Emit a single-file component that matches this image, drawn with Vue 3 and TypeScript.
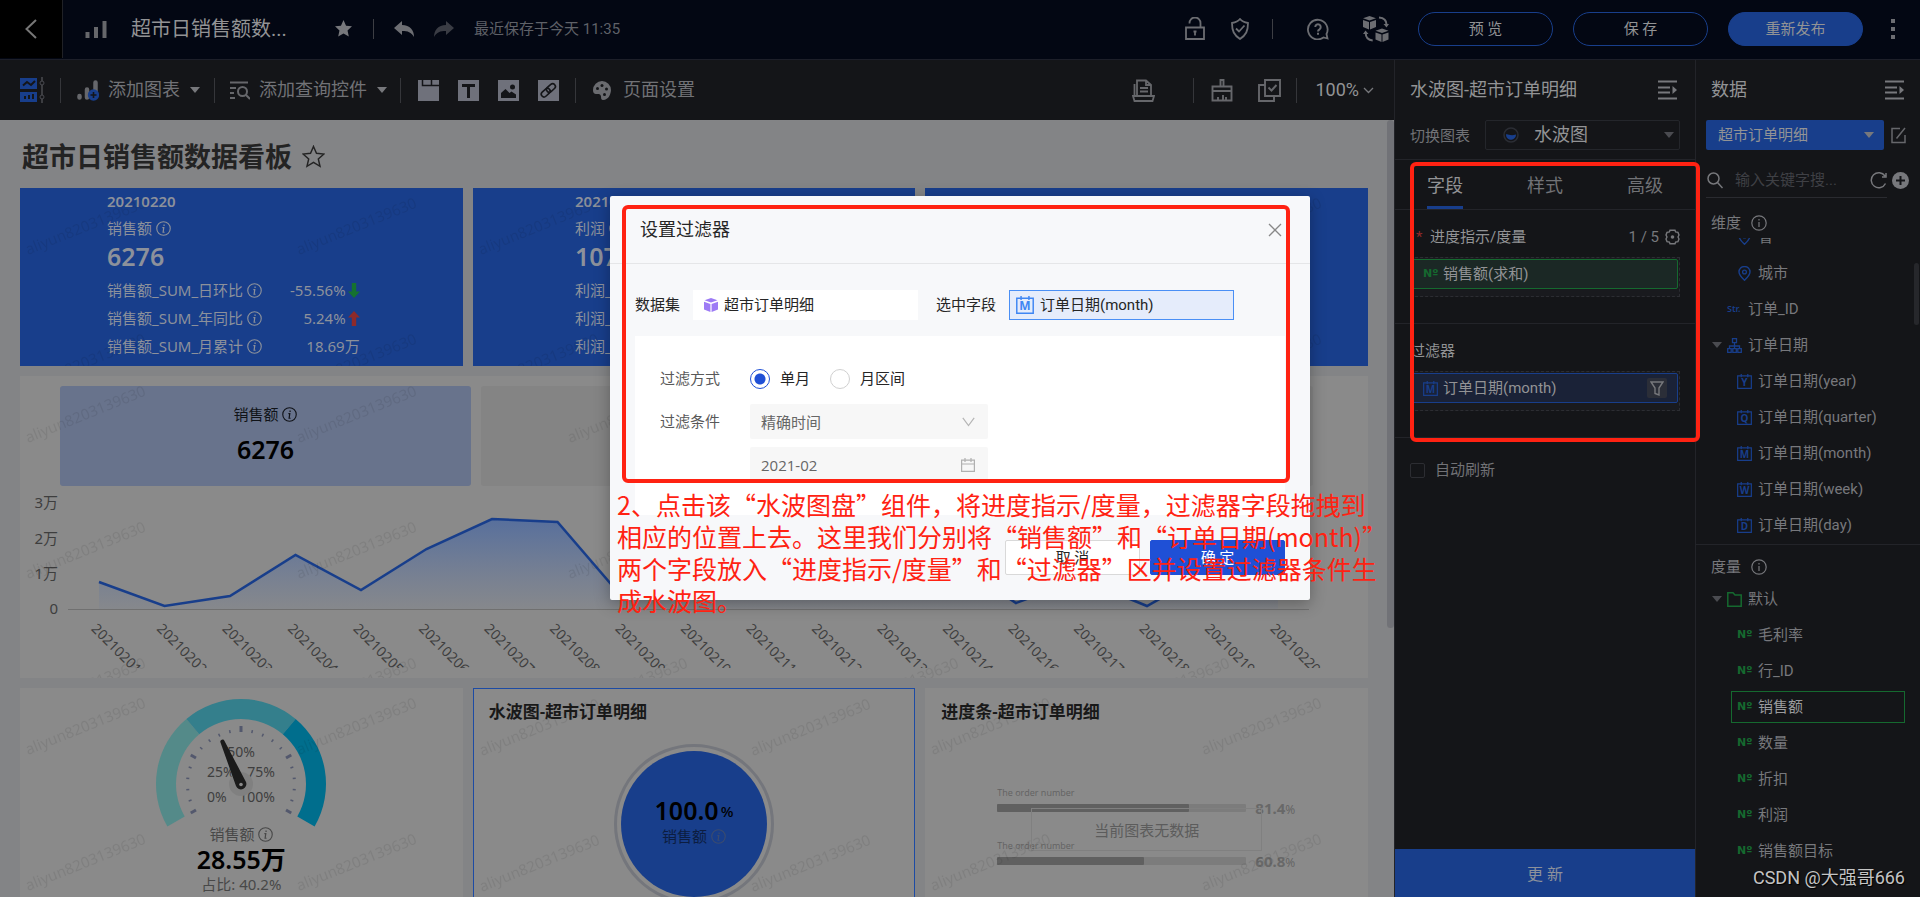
<script setup lang="ts">
import { ref } from 'vue'

interface KpiRow { label: string; value: string; trend?: 'up' | 'down' }
interface Kpi { date: string; name: string; total: string; rows: KpiRow[] }
interface Field { label: string; icon: 'pin' | 'str' | 'tree' | 'cal' | 'folder' | 'num'; letter?: string; level: 0 | 1; selected?: boolean }

const kpis: Kpi[] = [
  {
    date: '20210220', name: '销售额', total: '6276',
    rows: [
      { label: '销售额_SUM_日环比', value: '-55.56%', trend: 'down' },
      { label: '销售额_SUM_年同比', value: '5.24%', trend: 'up' },
      { label: '销售额_SUM_月累计', value: '18.69万' },
    ],
  },
  {
    date: '20210220', name: '利润', total: '1075',
    rows: [
      { label: '利润_SUM_日环比', value: '', trend: 'down' },
      { label: '利润_SUM_年同比', value: '', trend: 'up' },
      { label: '利润_SUM_月累计', value: '' },
    ],
  },
]

const dimensions: Field[] = [
  { label: '省', icon: 'pin', level: 1 },
  { label: '城市', icon: 'pin', level: 1 },
  { label: '订单_ID', icon: 'str', level: 0 },
  { label: '订单日期', icon: 'tree', level: 0 },
  { label: '订单日期(year)', icon: 'cal', letter: 'Y', level: 1 },
  { label: '订单日期(quarter)', icon: 'cal', letter: 'Q', level: 1 },
  { label: '订单日期(month)', icon: 'cal', letter: 'M', level: 1 },
  { label: '订单日期(week)', icon: 'cal', letter: 'W', level: 1 },
  { label: '订单日期(day)', icon: 'cal', letter: 'D', level: 1 },
]
const measures: Field[] = [
  { label: '默认', icon: 'folder', level: 0 },
  { label: '毛利率', icon: 'num', level: 1 },
  { label: '行_ID', icon: 'num', level: 1 },
  { label: '销售额', icon: 'num', level: 1, selected: true },
  { label: '数量', icon: 'num', level: 1 },
  { label: '折扣', icon: 'num', level: 1 },
  { label: '利润', icon: 'num', level: 1 },
  { label: '销售额目标', icon: 'num', level: 1 },
]

const days = ['01', '02', '03', '04', '05', '06', '07', '08', '09', '10', '11', '12', '13', '14', '16', '17', '18', '19', '20']
const heights = [27, 3, 13, 54, 19, 60, 90, 87, 11, 30, 50, 40, 60, 50, 6, 30, 3, 40, 14]
const pointX = (i: number): number => 79 + i * 65.5
const baseY = 123
const linePoints = heights.map((v, i) => `${pointX(i)},${baseY - v}`).join(' ')
const areaPoints = `${pointX(0)},${baseY} ${linePoints} ${pointX(18)},${baseY}`
const yTicks = [{ t: '3万', y: 17 }, { t: '2万', y: 53 }, { t: '1万', y: 88 }, { t: '0', y: 123 }]

const polar = (r: number, deg: number): string => {
  const a = (deg * Math.PI) / 180
  return `${(100 + r * Math.cos(a)).toFixed(2)} ${(92 - r * Math.sin(a)).toFixed(2)}`
}
const arc = (from: number, to: number): string =>
  `M${polar(85, from)}A85 85 0 0 1 ${polar(85, to)}L${polar(65, to)}A65 65 0 0 0 ${polar(65, from)}Z`
const segments = [
  { d: arc(210, 130), c: '#548a89' },
  { d: arc(130, 50), c: '#347f8c' },
  { d: arc(50, -30), c: '#006e8d' },
]
const ticks = Array.from({ length: 21 }, (_, i) => {
  const deg = 210 - i * 12
  const major = i % 5 === 0
  return { d: `M${polar(major ? 58 : 55, deg)}L${polar(52, deg)}`, w: major ? 3 : 1.5 }
})

const bars = [
  { pct: '81.4', width: 77 },
  { pct: '60.8', width: 59 },
]
const note = [
  '2、点击该“水波图盘”组件，将进度指示/度量，过滤器字段拖拽到',
  '相应的位置上去。这里我们分别将“销售额”和“订单日期(month)”',
  '两个字段放入“进度指示/度量”和“过滤器”区并设置过滤器条件生',
  '成水波图。',
]

const tabs = ['字段', '样式', '高级']
const activeTab = ref('字段')
const mode = ref('single')
const condition = ref('精确时间')
const month = ref('2021-02')
const keyword = ref('')
const autoRefresh = ref(false)
</script>

<template>
  <div class="app">
    <svg class="defs" aria-hidden="true">
      <defs>
        <symbol id="i-info" viewBox="0 0 16 16">
          <circle cx="8" cy="8" r="7.2" fill="none" stroke="currentColor" stroke-width="1.2" />
          <path d="M8.6 3.8v1.6M6.8 7h1.5l-.7 5h1.5" fill="none" stroke="currentColor" stroke-width="1.3" />
        </symbol>
        <symbol id="i-cal" viewBox="0 0 16 16">
          <path d="M.7 2h14.6v13.300H.7zM4.500 0v3.500M11.500 0v3.500" fill="none" stroke="currentColor" stroke-width="1.3" />
        </symbol>
        <symbol id="i-fold" viewBox="0 0 20 20">
          <path d="M0 1.500h19M0 7.500h12M0 12.500h12M0 18.500h19" stroke="currentColor" stroke-width="1.800" />
          <path d="M14.500 6l4.500 4-4.500 4z" fill="currentColor" />
        </symbol>
        <pattern id="wm" width="271" height="136" patternUnits="userSpaceOnUse">
          <text x="8" y="67" transform="rotate(-22 8 67)" class="wm-text">aliyun8203139630</text>
        </pattern>
        <linearGradient id="area" x1="0" y1="0" x2="0" y2="1">
          <stop offset="0" stop-color="#2454ae" stop-opacity="0.5" />
          <stop offset="1" stop-color="#3a62b0" stop-opacity="0.05" />
        </linearGradient>
      </defs>
    </svg>

    <header class="top">
      <button class="back" aria-label="返回">
        <svg width="12" height="20" viewBox="0 0 12 20"><path d="M11 1L1.500 10 11 19" fill="none" stroke="#777" stroke-width="2" /></svg>
      </button>
      <svg class="bars-icon" width="22" height="18" viewBox="0 0 22 18"><path d="M2.500 18v-6M11 18V7M19.500 18V1" stroke="#66676b" stroke-width="4" /></svg>
      <h1 class="doc">超市日销售额数...</h1>
      <svg class="star" width="17" height="17" viewBox="0 0 24 24"><path d="M12 0l3.600 8 8.400.9-6.300 5.800 1.800 8.700L12 19l-7.500 4.400 1.800-8.700L0 8.900 8.400 8z" fill="#77787c" /></svg>
      <i class="bar"></i>
      <svg class="undo" width="20" height="16" viewBox="0 0 20 16"><path d="M8 0v4c8 0 12 5 12 12-3-5-6-6-12-6v4L0 7z" fill="#6d6e73" /></svg>
      <svg class="redo" width="20" height="16" viewBox="0 0 20 16"><path d="M12 0v4C4 4 0 9 0 16c3-5 6-6 12-6v4l8-7z" fill="#3a3c44" /></svg>
      <span class="saved">最近保存于今天 11:35</span>
      <div class="top-right">
        <svg width="20" height="23" viewBox="0 0 20 23"><g fill="none" stroke="#6c6d72" stroke-width="1.800"><path d="M1 10.500h18V22H1zM4.500 6.500V6a5.500 5.500 0 0 1 11 0v4.500" /></g><path d="M10 13.500v5M8.500 14.500h3" stroke="#6c6d72" stroke-width="1.800" /></svg>
        <svg width="18" height="22" viewBox="0 0 18 22"><path d="M9 1c2 2.500 5 3.500 8 4 0 8-2 12-8 16C3 17 1 13 1 5c3-.5 6-1.500 8-4zM5 10.500l3 3 5.500-6" fill="none" stroke="#6c6d72" stroke-width="1.800" /></svg>
        <i class="bar"></i>
        <svg width="22" height="22" viewBox="0 0 22 22"><path d="M20.500 20.500l-4-1A9.800 9.800 0 1 1 19.500 16z" fill="none" stroke="#6c6d72" stroke-width="1.800" /><path d="M8.300 9a2.700 2.700 0 1 1 4.200 2.300c-1 .6-1.500 1-1.500 2.200M11 14.800v2" fill="none" stroke="#6c6d72" stroke-width="2" /></svg>
        <svg width="26" height="26" viewBox="0 0 26 26"><g fill="#6c6d72"><path d="M6.500 0L13 2.200 6.500 4.400 0 2.200zM0 4l6 2v7.500L0 11zM13 4L7 6v7.500l6-2.500zM19 12.500l6.500 2.200L19 17l-6.500-2.300zM12.500 16.500l6 2V26l-6-2.500zM25.500 16.500l-6 2V26l6-2.500z" /><path d="M20.500 8h5.500l-2.500 3.500zM0 18h5.500L2.500 14.500z" /></g><path d="M16 1.500c5 .5 7.500 2.500 7.500 7M2.700 17c0 5 2 7 7 7.500" fill="none" stroke="#6c6d72" stroke-width="2" /></svg>
        <button class="pill">预 览</button>
        <button class="pill">保 存</button>
        <button class="pill solid">重新发布</button>
        <button class="dots" aria-label="更多"><i></i><i></i><i></i></button>
      </div>
    </header>

    <div class="body">
      <main class="main">
        <nav class="tools">
          <svg class="t-mode" width="25" height="26" viewBox="0 0 25 26"><path d="M0 1h17v11H0zM0 15h17v10H0z" fill="#183e8b" /><path d="M3 8.500l4-3.500 4 3 4-4M5 22v-3M9 22v-4M13 22v-5" fill="none" stroke="#141518" stroke-width="2" /><path d="M22 0v26" stroke="#3c3d41" stroke-width="2" /><circle cx="22" cy="6" r="2" fill="#141518" stroke="#4a4b50" /><circle cx="22" cy="20" r="2" fill="#141518" stroke="#4a4b50" /></svg>
          <i class="bar"></i>
          <button class="tool t-chart">
            <svg width="22" height="21" viewBox="0 0 22 21"><path d="M2.500 16v1.500M10 17.500v-8M18.500 14V2.500" stroke="#66676b" stroke-width="4.500" stroke-linecap="round" /><circle cx="16.500" cy="15" r="5.700" fill="#183e8b" /><path d="M16.500 12v6M13.500 15h6" stroke="#141518" stroke-width="1.600" /></svg>
            <span>添加图表</span><b class="caret"></b>
          </button>
          <i class="bar"></i>
          <button class="tool t-query">
            <svg width="20" height="19" viewBox="0 0 20 19"><path d="M0 1.500h18M0 7h6M0 12h4M0 17h5" stroke="#66676b" stroke-width="2" /><circle cx="12.500" cy="10.500" r="4.500" fill="none" stroke="#66676b" stroke-width="2" /><path d="M16 14l4 4" stroke="#66676b" stroke-width="2" /></svg>
            <span>添加查询控件</span><b class="caret"></b>
          </button>
          <i class="bar"></i>
          <div class="squares">
            <svg width="21" height="21" viewBox="0 0 21 21"><path d="M0 0h21v21H0z" fill="#6f717b" /><path d="M4.500 0v5.500H21M13.500 0v5.500" fill="none" stroke="#141518" stroke-width="1.500" /></svg>
            <svg width="21" height="21" viewBox="0 0 21 21"><path d="M0 0h21v21H0z" fill="#6f717b" /><path d="M4 5.500h13M10.500 5.500V18" stroke="#141518" stroke-width="3" /></svg>
            <svg width="21" height="21" viewBox="0 0 21 21"><path d="M0 0h21v21H0z" fill="#6f717b" /><circle cx="14.500" cy="7" r="2.500" fill="#141518" /><path d="M3 18v-5l4.500-4 4 4 2-1.500 4.500 3V18z" fill="#141518" /></svg>
            <svg width="21" height="21" viewBox="0 0 21 21"><path d="M0 0h21v21H0z" fill="#6f717b" /><g transform="rotate(-42 10.500 10.500)" fill="none" stroke="#141518" stroke-width="1.600"><rect x="2" y="7.500" width="10" height="5.500" rx="2.700" /><rect x="9" y="7.500" width="10" height="5.500" rx="2.700" /></g></svg>
          </div>
          <i class="bar"></i>
          <button class="tool t-page">
            <svg width="18" height="19" viewBox="0 0 18 19"><path d="M9 0a9 9 0 0 1 9 9c0 3-2 10-8 10-3 0-1-4-3-5.500C5 12 0 15 0 9a9 9 0 0 1 9-9z" fill="#6a6b6f" /><g fill="#141518"><circle cx="4.500" cy="7.500" r="1.500" /><circle cx="9" cy="4.500" r="1.500" /><circle cx="13.500" cy="8" r="1.500" /><circle cx="11.500" cy="13.500" r="1.500" /></g></svg>
            <span>页面设置</span>
          </button>
          <div class="tools-right">
            <svg width="23" height="23" viewBox="0 0 23 23"><path d="M5 16V1.500h9l5 4.500v10M14 1.500V6h5M8 9h8M8 12.500h8M2.500 16V5M1 17h21l-1.500 5h-18z" fill="none" stroke="#66676b" stroke-width="1.800" /></svg>
            <i class="bar"></i>
            <svg width="22" height="23" viewBox="0 0 22 23"><path d="M9.500 7V1h3v6M1.500 7.500h19V12h-19zM1.500 12v9.500h19V12M7 21.500V18M12 21.500V16M15 21.500V18" fill="none" stroke="#66676b" stroke-width="1.900" /></svg>
            <svg width="23" height="23" viewBox="0 0 23 23"><path d="M7 1h15v16H7zM7 6H1v16h15v-5M10.500 8.500l3 3 5-5.500" fill="none" stroke="#66676b" stroke-width="1.900" /></svg>
            <i class="bar"></i>
            <button class="zoom">100%<svg width="11" height="7" viewBox="0 0 11 7"><path d="M1 1l4.500 4.500L10 1" fill="none" stroke="#77787c" stroke-width="1.300" /></svg></button>
          </div>
        </nav>

        <div class="board">
          <h2 class="board-title">超市日销售额数据看板
            <svg width="23" height="23" viewBox="0 0 24 24"><path d="M12 1.500l3.100 7.200 7.800.7-5.900 5.200 1.800 7.700-6.800-4.100-6.800 4.100L7 14.600 1.100 9.400l7.800-.7z" fill="none" stroke="#232323" stroke-width="1.500" /></svg>
          </h2>

          <section class="row3">
            <article v-for="k in kpis" :key="k.name" class="kpi">
              <div class="kpi-in">
                <b class="kpi-date">{{ k.date }}</b>
                <span class="kpi-name">{{ k.name }} <svg class="info"><use href="#i-info" /></svg></span>
                <strong class="kpi-total">{{ k.total }}</strong>
                <div v-for="r in k.rows" :key="r.label" class="kpi-row">
                  <span>{{ r.label }} <svg class="info"><use href="#i-info" /></svg></span>
                  <em>{{ r.value }}<svg v-if="r.trend" :class="['arrow', r.trend]" width="12" height="15" viewBox="0 0 12 15"><path d="M6 0l6 6.500H8.200V15H3.800V6.500H0z" fill="currentColor" /></svg></em>
                </div>
              </div>
              <svg class="wm"><rect width="100%" height="100%" fill="url(#wm)" /></svg>
            </article>
            <article class="kpi"><svg class="wm"><rect width="100%" height="100%" fill="url(#wm)" /></svg></article>
          </section>

          <section class="trend">
            <div class="tiles">
              <button class="tile on"><span>销售额 <svg class="info"><use href="#i-info" /></svg></span><strong>6276</strong></button>
              <button class="tile" aria-label="利润"></button>
              <button class="tile" aria-label="指标"></button>
            </div>
            <svg class="chart" viewBox="0 0 1348 192">
              <clipPath id="lab"><rect x="0" y="130" width="1348" height="52" /></clipPath>
              <text v-for="t in yTicks" :key="t.t" x="38" :y="t.y + 5" text-anchor="end">{{ t.t }}</text>
              <polygon :points="areaPoints" fill="url(#area)" />
              <path d="M48 123.500H1289" stroke="#707070" />
              <polyline :points="linePoints" fill="none" stroke="#183e8b" stroke-width="2.500" />
              <g clip-path="url(#lab)">
                <text v-for="(d, i) in days" :key="d" class="day" :transform="`translate(${pointX(i) - 5} 140) rotate(45)`" y="5">202102{{ d }}</text>
              </g>
            </svg>
            <svg class="wm"><rect width="100%" height="100%" fill="url(#wm)" /></svg>
          </section>

          <section class="row3 last">
            <article class="card gauge">
              <svg width="200" height="144" viewBox="0 0 200 144">
                <path v-for="s in segments" :key="s.c" :d="s.d" :fill="s.c" />
                <path v-for="t in ticks" :key="t.d" :d="t.d" stroke="#53586d" :stroke-width="t.w" />
                <text x="100" y="65" text-anchor="middle">50%</text>
                <text x="66" y="85">25%</text>
                <text x="134" y="85" text-anchor="end">75%</text>
                <text x="66" y="110">0%</text>
                <text x="134" y="110" text-anchor="end">100%</text>
                <circle cx="100" cy="92" r="12" fill="#808080" />
                <path d="M79.500 50.500a2 2 0 0 1 4-1.500L105 90a5.300 5.300 0 1 1-10 4z" fill="#1b1b1b" />
                <circle cx="100" cy="92.500" r="1.800" fill="#8a8a8a" />
              </svg>
              <span class="g-name">销售额 <svg class="info"><use href="#i-info" /></svg></span>
              <strong>28.55万</strong>
              <span class="g-sub">占比: 40.2%</span>
              <svg class="wm"><rect width="100%" height="100%" fill="url(#wm)" /></svg>
            </article>
            <article class="card liquid">
              <h3>水波图-超市订单明细</h3>
              <div class="ring">
                <div class="fill">
                  <strong>100.0<small>%</small></strong>
                  <span>销售额 <svg class="info"><use href="#i-info" /></svg></span>
                </div>
              </div>
              <svg class="wm"><rect width="100%" height="100%" fill="url(#wm)" /></svg>
            </article>
            <article class="card progress">
              <h3>进度条-超市订单明细</h3>
              <div class="bars">
                <div v-for="b in bars" :key="b.pct" class="pbar">
                  <small>The order number</small>
                  <div class="pline"><div class="track"><i :style="{ width: b.width + '%' }"></i></div><b>{{ b.pct }}<small>%</small></b></div>
                </div>
                <div class="empty">当前图表无数据</div>
              </div>
              <svg class="wm"><rect width="100%" height="100%" fill="url(#wm)" /></svg>
            </article>
          </section>
          <i class="scroll"></i>
        </div>
      </main>

      <aside class="panel">
        <div class="p-head"><span>水波图-超市订单明细</span><svg width="20" height="20"><use href="#i-fold" /></svg></div>
        <div class="switch">
          <label for="ctype">切换图表</label>
          <div class="sel-box">
            <svg width="16" height="16" viewBox="0 0 16 16"><circle cx="8" cy="8" r="7" fill="none" stroke="#2b2d34" stroke-width="1.500" /><path d="M3 7.500c2-1 4 2 10 0A5 5 0 0 1 3 8z" fill="#183e8b" /></svg>
            <select id="ctype"><option>水波图</option></select><b class="caret"></b>
          </div>
        </div>
        <div class="tabs">
          <button v-for="t in tabs" :key="t" :class="{ on: t === activeTab }" @click="activeTab = t">{{ t }}</button>
        </div>
        <section class="sec">
          <div class="sec-t req"><span><i>*</i>进度指示/度量</span>
            <span class="cnt">1 / 5 <svg width="15" height="16" viewBox="0 0 15 16"><path d="M5 1.200h5l.6 1.800 2.400.4L14 6l-1 2 1 2-1 2.600-2.400.4-.6 1.800H5L4.400 13 2 12.600 1 10l1-2-1-2 1-2.600L4.400 3z" fill="none" stroke="#77787c" stroke-width="1.400" /><circle cx="7.500" cy="8" r="1.800" fill="#77787c" /></svg></span>
          </div>
          <div class="drop"><div class="chip green"><b class="num">Nº</b><span>销售额(求和)</span></div></div>
        </section>
        <section class="sec">
          <div class="sec-t"><span>过滤器</span></div>
          <div class="drop"><div class="chip blue"><span class="cal"><svg><use href="#i-cal" /></svg>M</span><span>订单日期(month)</span>
            <button class="filter" aria-label="设置过滤器"><svg width="14" height="15" viewBox="0 0 14 15"><path d="M1 1h12L9 7v7l-4-1.500V7z" fill="none" stroke="#77787c" stroke-width="1.400" /></svg></button>
          </div></div>
        </section>
        <label class="auto"><input v-model="autoRefresh" type="checkbox">自动刷新</label>
        <button class="update">更 新</button>
        <div class="mark"></div>
      </aside>

      <aside class="panel data">
        <div class="p-head"><span>数据</span><svg width="20" height="20"><use href="#i-fold" /></svg></div>
        <div class="ds">
          <button class="ds-btn">超市订单明细<b class="caret"></b></button>
          <svg width="16" height="17" viewBox="0 0 16 17"><path d="M9 1.500H1v14h13V8M5.500 11.500L14 1" fill="none" stroke="#66676b" stroke-width="1.500" /></svg>
        </div>
        <div class="search">
          <svg width="16" height="17" viewBox="0 0 16 17"><circle cx="6.500" cy="6.500" r="5.500" fill="none" stroke="#77787c" stroke-width="1.500" /><path d="M10.500 10.500l5 5.500" stroke="#77787c" stroke-width="1.500" /></svg>
          <input v-model="keyword" type="text" placeholder="输入关键字搜..." aria-label="搜索字段">
          <svg width="17" height="18" viewBox="0 0 17 18"><path d="M15.500 12.500A7.500 7.500 0 1 1 15 5M16 2v4h-4" fill="none" stroke="#77787c" stroke-width="1.500" /></svg>
          <svg class="plus" width="17" height="17" viewBox="0 0 17 17"><circle cx="8.500" cy="8.500" r="8.500" fill="#77787c" /><path d="M8.500 4v9M4 8.500h9" stroke="#141518" stroke-width="2" /></svg>
        </div>
        <div class="grp-t dim">维度 <svg width="16" height="16" viewBox="0 0 16 16"><circle cx="8" cy="8" r="7.200" fill="none" stroke="#77787c" stroke-width="1.200" /><path d="M8 4v1.500M8 7v5" stroke="#77787c" stroke-width="1.200" /></svg></div>
        <div class="list-wrap">
          <ul class="list">
            <li v-for="f in dimensions" :key="f.label" :class="'lv' + f.level">
              <b v-if="f.icon === 'tree'" class="caret"></b>
              <svg v-if="f.icon === 'pin'" width="15" height="15" viewBox="0 0 15 15"><path d="M7.500 14.300C4 11 2 9 2 6a5.500 5.500 0 0 1 11 0c0 3-2 5-5.500 8.300z" fill="none" stroke="#183e8b" stroke-width="1.400" /><circle cx="7.500" cy="6" r="1.900" fill="none" stroke="#183e8b" stroke-width="1.300" /></svg>
              <b v-else-if="f.icon === 'str'" class="str">Str.</b>
              <svg v-else-if="f.icon === 'tree'" width="15" height="15" viewBox="0 0 15 15"><path d="M5.500.7h4v4h-4zM.7 10.700h3.500v3.600H.7zM5.800 10.700h3.500v3.600H5.800zM10.800 10.700h3.500v3.600h-3.500zM7.500 4.700v6M2.500 10.700V8h10v2.700" fill="none" stroke="#183e8b" stroke-width="1.300" /></svg>
              <span v-else class="cal"><svg><use href="#i-cal" /></svg>{{ f.letter }}</span>
              <span>{{ f.label }}</span>
            </li>
          </ul>
          <i class="thumb"></i>
        </div>
        <div class="grp-t mea">度量 <svg width="16" height="16" viewBox="0 0 16 16"><circle cx="8" cy="8" r="7.200" fill="none" stroke="#77787c" stroke-width="1.200" /><path d="M8 4v1.500M8 7v5" stroke="#77787c" stroke-width="1.200" /></svg></div>
        <ul class="list">
          <li v-for="f in measures" :key="f.label" :class="['lv' + f.level, { sel: f.selected }]">
            <template v-if="f.icon === 'folder'">
              <b class="caret"></b>
              <svg width="15" height="15" viewBox="0 0 15 15"><path d="M.8 14.200V.8H6l2 2.200h6.200v11.200z" fill="none" stroke="#15692f" stroke-width="1.500" /></svg>
            </template>
            <b v-else class="num">Nº</b>
            <span>{{ f.label }}</span>
          </li>
        </ul>
        <div class="csdn">CSDN @大强哥666</div>
      </aside>
    </div>

    <div class="layer">
      <div class="modal" role="dialog" aria-label="设置过滤器">
        <div class="m-head"><span>设置过滤器</span>
          <button aria-label="关闭"><svg width="14" height="14" viewBox="0 0 14 14"><path d="M1 1l12 12M13 1L1 13" stroke="#888" stroke-width="1.300" /></svg></button>
        </div>
        <div class="m-meta">
          <span>数据集</span>
          <div class="box"><svg width="14" height="14" viewBox="0 0 14 14"><path d="M7 0l6.500 2.200L7 4.400.5 2.200zM0 3.800l6.400 2.300V14L0 11.500zM14 3.800L7.600 6.100V14l6.400-2.500z" fill="#9d7bf5" /></svg>超市订单明细</div>
          <span class="second">选中字段</span>
          <div class="box picked"><span class="cal"><svg><use href="#i-cal" /></svg>M</span>订单日期(month)</div>
        </div>
        <div class="m-form">
          <div class="f-row"><span class="lab">过滤方式</span>
            <label><input v-model="mode" type="radio" value="single">单月</label>
            <label><input v-model="mode" type="radio" value="range">月区间</label>
          </div>
          <div class="f-row"><label class="lab" for="cond">过滤条件</label>
            <div class="ctl"><select id="cond" v-model="condition"><option>精确时间</option></select>
              <svg width="13" height="10" viewBox="0 0 13 10"><path d="M.8.800l5.700 7.700L12.200.8" fill="none" stroke="#b5b5b5" stroke-width="1.200" /></svg></div>
          </div>
          <div class="f-row clip"><span class="lab"></span>
            <div class="ctl"><input v-model="month" type="text" aria-label="月份">
              <svg width="14" height="14" viewBox="0 0 14 14"><path d="M.6 2.200h12.800v11.200H.6zM.6 6h12.800M4 0v4M10 0v4" fill="none" stroke="#b0b0b0" stroke-width="1.200" /></svg></div>
          </div>
        </div>
        <div class="m-foot"><button>取 消</button><button class="ok">确 定</button></div>
        <div class="mark"></div>
        <p class="note"><span v-for="l in note" :key="l">{{ l }}</span></p>
      </div>
    </div>
  </div>
</template>

<style>
html, body { margin: 0; background: #141518; }
.wm-text { font: 15px "Noto Sans", sans-serif; fill: rgba(0, 0, 0, 0.08); }
</style>

<style scoped>
.app { position: relative; height: 100vh; overflow: hidden; display: flex; flex-direction: column; font: 15px/20px Roboto, "Noto Sans CJK SC", sans-serif; color: #85868a; background: #141518; }
.app *, .app *::before { box-sizing: border-box; }
.defs { position: absolute; width: 0; height: 0; }
button, input, select { font: inherit; color: inherit; background: none; border: 0; padding: 0; margin: 0; }
button { cursor: pointer; white-space: nowrap; }
svg { flex: none; }
h1, h2, h3, ul, p { margin: 0; padding: 0; }
i, em { font-style: normal; }
.bar { width: 1px; height: 25px; background: #35363a; flex: none; }
.caret { width: 0; height: 0; border: 5px solid transparent; border-top: 6px solid #77787c; border-bottom: 0; flex: none; }
.info { width: 15px; height: 15px; vertical-align: -2px; }
.mark { position: absolute; border: 4px solid #ff2212; border-radius: 6px; pointer-events: none; }

.top { height: 60px; flex: none; display: flex; align-items: center; background: #030713; border-bottom: 1px solid #1d1f29; padding-bottom: 2px; }
.back { width: 63px; height: 59px; background: #000; border-right: 1px solid #202126; flex: none; display: flex; align-items: center; justify-content: center; }
.bars-icon { margin-left: 22px; }
.doc { margin-left: 24px; width: 190px; font-size: 20px; line-height: 28px; font-weight: 400; color: #929395; white-space: nowrap; }
.star { margin-left: 14px; }
.top .bar { height: 20px; margin-left: 21px; background: #3d3e44; }
.undo { margin-left: 20px; }
.redo { margin-left: 20px; }
.saved { margin-left: 20px; color: #5f6168; white-space: nowrap; }
.top-right { margin-left: auto; display: flex; align-items: center; gap: 20px; padding-right: 17px; }
.top-right > svg:nth-child(2) { margin-left: 6px; }
.top-right .bar { margin: 0 14px 0 3px; }
.top-right > svg:nth-child(5) { margin: 0 9px 0 14px; }
.pill { width: 135px; height: 34px; border: 1px solid #183e8b; border-radius: 17px; color: #929395; }
.pill.solid { background: #183e8b; }
.dots { display: flex; flex-direction: column; gap: 4px; width: 20px; align-items: center; }
.dots i { width: 4px; height: 4px; background: #6c6d72; }

.body { flex: 1; min-height: 0; display: grid; grid-template-columns: minmax(0, 1fr) 301px 225px; }
.main { display: flex; flex-direction: column; min-height: 0; }
.tools { height: 60px; flex: none; display: flex; align-items: center; padding: 0 20px; font-size: 18px; line-height: 26px; color: #717276; }
.tools .bar { margin: 0 15px; }
.tool { display: flex; align-items: center; }
.tool span { margin-left: 9px; }
.tool .caret { margin-left: 10px; }
.tools .t-chart { margin: 0 -1px 0 1px; }
.tools .t-query { margin: 0 -2px 0 0; }
.squares { display: flex; gap: 19px; margin: 0 1px 0 2px; }
.t-page { margin-left: 2px; }
.t-page span { margin-left: 12px; }
.tools-right { margin-left: auto; display: flex; align-items: center; }
.tools-right .bar:nth-child(2) { margin: 0 17px 0 38px; }
.tools-right svg:nth-child(4) { margin-left: 25px; }
.zoom { display: flex; align-items: center; gap: 4px; margin-left: 3px; color: #929395; }

.board { position: relative; flex: 1; min-height: 0; overflow: hidden; background: #838486; padding: 0 26px 0 20px; font-family: "Noto Sans", "Noto Sans CJK SC", sans-serif; }
.board-title { height: 68px; padding: 5px 0 0 2px; display: flex; align-items: center; gap: 10px; font-size: 27px; line-height: 36px; font-weight: 600; color: #232323; white-space: nowrap; }
.scroll { position: absolute; right: 0; top: 0; width: 7px; height: 508px; background: #717277; border-radius: 4px; }
.row3 { display: grid; grid-template-columns: repeat(3, minmax(0, 1fr)); gap: 10px; }
.wm { position: absolute; inset: 0; width: 100%; height: 100%; pointer-events: none; }
.kpi { position: relative; height: 178px; background: #183e8b; color: #8c919b; display: flex; justify-content: center; padding: 3px 16px 0 0; overflow: hidden; }
.kpi-in { display: flex; flex-direction: column; min-width: 222px; white-space: nowrap; }
.kpi-date { font-weight: 600; }
.kpi-name { margin-top: 7px; }
.kpi-total { font-size: 25px; line-height: 36px; font-weight: 600; margin-bottom: 2px; }
.kpi-row { display: flex; justify-content: space-between; gap: 28px; height: 28px; align-items: center; }
.kpi-row em { display: flex; align-items: center; gap: 2px; }
.down { color: #15722f; transform: rotate(180deg); }
.up { color: #8e2a2a; }

.trend { position: relative; margin: 10px 0; background: #8a8a8a; padding-top: 10px; overflow: hidden; }
.tiles { display: grid; grid-template-columns: repeat(3, minmax(0, 1fr)); gap: 10px; margin: 0 55px 0 40px; }
.tile { height: 100px; border-radius: 3px; background: #848484; color: #101318; display: flex; flex-direction: column; align-items: center; }
.tile.on { background: #68738c; }
.tile span { margin-top: 18px; }
.tile strong { font-size: 25px; line-height: 36px; margin-top: 7px; font-weight: 600; color: #000; }
.chart { display: block; width: 100%; height: auto; }
.chart text { font-size: 15px; fill: #3e3e3e; }
.chart .day { font-size: 14px; }

.card { position: relative; height: 300px; background: #8a8a8a; overflow: hidden; }
.card h3 { font-size: 17px; line-height: 24px; font-weight: 600; color: #191919; padding: 12px 16px 0; }
.gauge { display: flex; flex-direction: column; align-items: center; padding-top: 4px; }
.gauge svg text { font-size: 14px; fill: #3e3e3e; }
.g-name { color: #484848; margin-top: -12px; }
.gauge strong { font-size: 25px; line-height: 30px; font-weight: 600; color: #000; }
.g-sub { color: #484848; }
.liquid { border: 1px solid #1d4ba4; }
.liquid h3 { padding: 11px 15px 0; }
.ring { width: 160px; height: 160px; margin: 20px auto 0; border: 3px solid #74767c; border-radius: 50%; padding: 4px; }
.fill { height: 100%; border-radius: 50%; background: #183e8b; display: flex; flex-direction: column; align-items: center; padding-top: 43px; color: #0c1d40; }
.fill strong { font-size: 25px; line-height: 32px; font-weight: 600; color: #000; }
.fill strong small { font-size: 15px; font-weight: 500; margin-left: 2px; vertical-align: 3px; line-height: 15px; }
.fill .info { color: #3a4b70; }
.progress .bars { position: relative; width: 300px; margin: 63px 0 0 72px; }
.pbar { height: 53px; }
.pbar small { font: 9px/12px "Open Sans", sans-serif; color: #626262; display: block; margin-bottom: 1px; }
.pline { display: flex; align-items: center; height: 16px; gap: 9px; }
.track { width: 249px; height: 8px; background: #7c7c7c; border-radius: 1px; }
.track i { display: block; height: 100%; background: #606060; border-radius: 1px; }
.pline b { font-size: 15px; font-weight: 700; color: #686868; white-space: nowrap; }
.pline b small { display: inline; font-size: 12px; }
.empty { position: absolute; left: 34px; top: 21px; width: 231px; height: 43px; border: 1px solid #808080; display: flex; align-items: center; justify-content: center; color: #5c5c5c; }

.panel { position: relative; display: flex; flex-direction: column; min-height: 0; border-left: 1px solid #232429; }
.panel .mark { left: 15px; top: 102px; width: 290px; height: 280px; z-index: 2; }
.p-head { height: 60px; flex: none; display: flex; align-items: center; justify-content: space-between; padding: 0 17px 0 15px; font-size: 18px; line-height: 24px; color: #929395; white-space: nowrap; }
.p-head svg { color: #77787c; }
.switch { height: 40px; display: flex; align-items: flex-start; padding: 0 15px; border-bottom: 1px solid #232429; color: #717276; }
.switch label { line-height: 32px; width: 75px; }
.sel-box { flex: 1; height: 30px; border: 1px solid #24262b; border-radius: 2px; display: flex; align-items: center; padding: 0 5px 0 17px; }
.sel-box select { flex: 1; appearance: none; padding-left: 15px; font-size: 18px; line-height: 26px; color: #929395; }
.sel-box .caret, .list .caret { border-top-color: #4a4b50; }
.tabs { height: 50px; display: flex; gap: 64px; padding-left: 32px; border-bottom: 1px solid #232429; font-size: 18px; color: #717276; }
.tabs button { width: 36px; border-bottom: 3px solid transparent; padding-top: 6px; }
.tabs .on { border-color: #183e8b; color: #929395; }
.sec { height: 114px; border-bottom: 1px solid #232429; padding: 17px 15px 0; flex: none; }
.sec-t { display: flex; justify-content: space-between; color: #929395; margin-bottom: 10px; }
.req i { color: #8e2a2a; display: inline-block; width: 20px; padding-left: 6px; }
.cnt { display: flex; align-items: center; gap: 6px; color: #77787c; }
.drop { height: 40px; border: 1px dashed #2c2d32; background: #191a1e; padding: 1px; }
.chip { height: 30px; border: 1px solid; border-radius: 2px; display: flex; align-items: center; gap: 5px; padding-left: 10px; color: #929395; }
.chip.green { border-color: #15692f; background: #1b2825; }
.chip.blue { border-color: #183e8b; background: #1a2237; }
.num { width: 15px; font: 700 11px/14px "DejaVu Sans", sans-serif; color: #15692f; flex: none; white-space: nowrap; }
.str { width: 15px; font: 600 9px/14px "Noto Sans", sans-serif; color: #183e8b; flex: none; }
.cal { position: relative; width: 15px; height: 15px; font: 700 10px/17px "Noto Sans", sans-serif; text-align: center; color: #183e8b; flex: none; }
.cal svg { position: absolute; inset: 0; width: 100%; height: 100%; }
.filter { margin: 0 10px 0 auto; width: 20px; height: 20px; background: #2b2e38; border-radius: 2px; display: flex; align-items: center; justify-content: center; }
.auto { display: flex; align-items: center; gap: 10px; padding: 22px 0 0 15px; color: #717276; }
.auto input { appearance: none; width: 15px; height: 15px; border: 1px solid #2c2d32; border-radius: 2px; }
.update { margin-top: auto; height: 48px; padding-top: 4px; background: #183e8b; color: #8c919b; font-size: 16px; }

.data .p-head { padding: 0 15px; }
.ds { display: flex; align-items: center; gap: 7px; padding-left: 10px; }
.ds-btn { width: 178px; height: 30px; background: #183e8b; border-radius: 2px; color: #929395; display: flex; align-items: center; justify-content: space-between; padding: 0 10px 0 12px; }
.search { height: 48px; flex: none; padding: 12px 11px 0; display: flex; align-items: center; position: relative; }
.search::before { content: ""; position: absolute; left: 10px; bottom: 0; width: 181px; height: 1px; background: #2a2b30; }
.search input { flex: 1; min-width: 0; outline: 0; padding-left: 12px; }
.search input::placeholder { color: #3f4045; opacity: 1; }
.plus { margin-left: 5px; }
.grp-t { flex: none; display: flex; align-items: center; gap: 10px; padding-left: 15px; color: #77787c; }
.dim { height: 40px; padding-top: 10px; }
.mea { height: 36px; padding-top: 7px; }
.list-wrap { position: relative; height: 307px; flex: none; overflow: hidden; border-bottom: 1px solid #232429; }
.list-wrap .list { margin-top: -19px; }
.list { list-style: none; color: #77787c; }
.list li { height: 36px; display: flex; align-items: center; gap: 6px; padding-left: 31px; position: relative; white-space: nowrap; }
.list .lv1 { padding-left: 41px; }
.list .caret { margin: 0 -1px 0 -15px; }
.list .sel { height: 32px; margin: 2px 15px 2px 35px; padding-left: 5px; border: 1px solid #15692f; color: #9a9b9d; }
.thumb { position: absolute; right: 1px; top: 25px; width: 5px; height: 62px; border-radius: 3px; background: #26272b; }
.csdn { position: absolute; right: 15px; bottom: 6px; font-size: 18px; line-height: 26px; color: #c4c4c4; white-space: nowrap; text-shadow: 1px 1px 1px #000; }

.layer { position: absolute; inset: 0; display: flex; justify-content: center; align-items: flex-start; padding-top: 196px; pointer-events: none; }
.modal { position: relative; width: 700px; background: #f7f8fa; border-radius: 2px; color: #262626; box-shadow: 0 4px 16px rgba(0, 0, 0, 0.3); pointer-events: auto; }
.modal > .mark { left: 12px; top: 9px; width: 668px; height: 278px; }
.m-head { height: 68px; border-bottom: 1px solid #e5e6e8; display: flex; align-items: center; justify-content: space-between; padding: 0 28px 0 30px; font-size: 18px; line-height: 26px; }
.m-head button { display: flex; }
.m-meta { height: 72px; display: flex; align-items: center; padding: 9px 25px 0; }
.m-meta > span { margin-right: 13px; }
.m-meta .second { margin-left: 18px; }
.box { width: 225px; height: 30px; background: #fff; display: flex; align-items: center; gap: 6px; padding-left: 11px; }
.picked { background: #e5ecfb; border: 1px solid #4a8ff5; padding-left: 6px; }
.picked .cal { width: 18px; height: 18px; font-size: 12px; line-height: 20px; color: #3f86f3; }
.m-form { margin: 0 25px; height: 179px; background: #fff; padding: 25px 25px 0; }
.f-row { height: 35px; display: flex; align-items: center; margin-bottom: 8px; }
.lab { width: 90px; color: #595959; }
.f-row label:not(.lab) { display: flex; align-items: center; gap: 10px; margin-right: 20px; }
.f-row input[type="radio"] { appearance: none; width: 20px; height: 20px; border: 1px solid #d0d0d0; border-radius: 50%; }
.f-row input[type="radio"]:checked { border-color: #1f50d6; background: radial-gradient(circle, #1f50d6 5px, transparent 6px); }
.ctl { width: 238px; height: 35px; background: #f7f7f7; border-radius: 2px; display: flex; align-items: center; padding: 0 13px 0 11px; color: #666; }
.ctl select, .ctl input { flex: 1; min-width: 0; appearance: none; outline: 0; font-family: "Open Sans", "Noto Sans CJK SC", sans-serif; line-height: 20px; }
.m-foot { height: 85px; display: flex; justify-content: flex-end; gap: 10px; padding: 25px 25px 0 0; }
.m-foot button { width: 135px; height: 35px; border: 1px solid #d9d9d9; border-radius: 2px; background: #fff; }
.m-foot .ok { background: #1f50d6; border-color: #1f50d6; color: #fff; }
.note { position: absolute; left: 7px; top: 292px; font: 25px/32px "Noto Sans CJK SC", sans-serif; color: #ff2212; white-space: nowrap; }
.note span { display: block; }
</style>
